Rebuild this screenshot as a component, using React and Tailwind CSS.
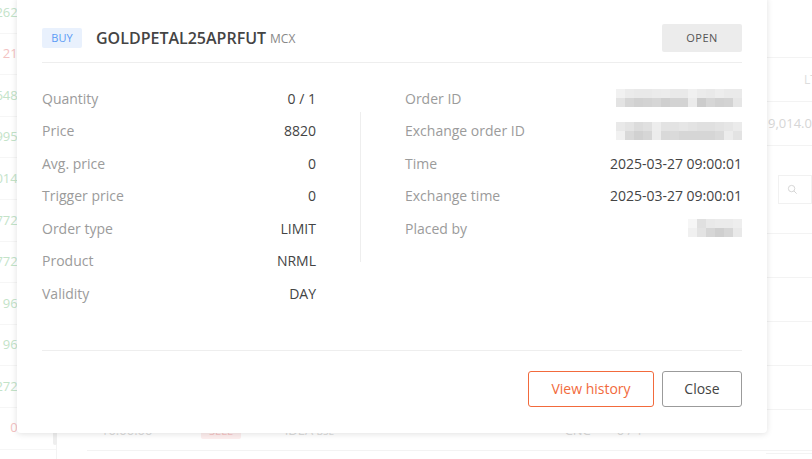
import React from 'react';

const leftRows = [
  { v: '262.50', c: 'text-[#c3e3c8]' },
  { v: '21.85', c: 'text-[#f3c2c2]' },
  { v: '648.20', c: 'text-[#c3e3c8]' },
  { v: '995.35', c: 'text-[#c3e3c8]' },
  { v: '014.05', c: 'text-[#c3e3c8]' },
  { v: '772.40', c: 'text-[#c3e3c8]' },
  { v: '772.40', c: 'text-[#c3e3c8]' },
  { v: '96.10', c: 'text-[#c3e3c8]' },
  { v: '96.10', c: 'text-[#c3e3c8]' },
  { v: '272.65', c: 'text-[#c3e3c8]' },
  { v: '0.05', c: 'text-[#f3c2c2]' },
];

const leftDetails = [
  ['Quantity', '0 / 1'],
  ['Price', '8820'],
  ['Avg. price', '0'],
  ['Trigger price', '0'],
  ['Order type', 'LIMIT'],
  ['Product', 'NRML'],
  ['Validity', 'DAY'],
];

// pixelated placeholder for the masked values
const Blur = ({ cells }) => (
  <div className="flex flex-col">
    {cells.map((row, i) => (
      <div key={i} className="flex">
        {row.map((c, j) => (
          <div key={j} className="h-[9px] w-[9px]" style={{ background: c }} />
        ))}
      </div>
    ))}
  </div>
);

const orderIdCells = [
  ['#f1f1f1', '#ebebeb', '#e9e9e9', '#e9e9e9', '#ebebeb', '#ececec', '#e9e9e9', '#e9e9e9', '#f0f0f0', '#ebebeb', '#e9e9e9', '#ededed', '#eaeaea', '#eaeaea'],
  ['#e3e3e3', '#d6d6d6', '#d1d1d1', '#d3d3d3', '#d6d6d6', '#cfcfcf', '#d3d3d3', '#d3d3d3', '#ebebeb', '#cccccc', '#d6d6d6', '#d1d1d1', '#d3d3d3', '#e6e6e6'],
];
const exIdCells = [
  ['#e9e9e9', '#e4e4e4', '#dcdcdc', '#e0e0e0', '#ededed', '#e3e3e3', '#e3e3e3', '#e6e6e6', '#e3e3e3', '#e0e0e0', '#e0e0e0', '#e3e3e3', '#e6e6e6', '#ebebeb'],
  ['#f1f1f1', '#d9d9d9', '#d1d1d1', '#d6d6d6', '#ececec', '#d9d9d9', '#dadada', '#d6d6d6', '#d6d6d6', '#d6d6d6', '#d6d6d6', '#dadada', '#ececec', '#e3e3e3'],
];
const placedCells = [
  ['#f6f6f6', '#e0e0e0', '#e9e9e9', '#ebebeb', '#ebebeb', '#eeeeee'],
  ['#f0f0f0', '#e3e3e3', '#d6d6d6', '#cfcfcf', '#d6d6d6', '#e9e9e9'],
];

const Background = () => (
  <div className="flex h-full w-full text-[13px]">
    <div className="mt-[-8px] flex w-[56px] flex-col">
      {leftRows.map((r, i) => (
        <div key={i} className="flex h-[41.6px] shrink-0 items-center justify-end whitespace-nowrap border-b border-[#f6f6f6] pr-[20px]">
          <span className={r.c}>{r.v}</span>
        </div>
      ))}
    </div>
    <div className="relative flex-1 border-l border-[#f3f3f3]">
      <div className="absolute left-[-4px] top-[430px] h-[15px] w-[4px] rounded-[2px] bg-[#eeeeee]" />
      <div className="absolute bottom-[14px] left-[40px] right-0 flex h-[28px] items-center text-[#dcdcdc]">
        <span className="ml-[4px] w-[100px]">10:00:00</span>
        <span className="rounded-[2px] bg-[#fdeeee] px-[8px] text-[11px] text-[#f6c4c4]">SELL</span>
        <span className="ml-[44px] w-[280px]">IDEA <span className="text-[10px]">BSE</span></span>
        <span className="w-[52px]">CNC</span>
        <span>0 / 1</span>
      </div>
      <div className="absolute bottom-[8px] left-[30px] right-0 border-b border-[#f3f3f3]" />
      <div className="absolute right-0 top-0 flex w-[46px] flex-col">
        <div className="h-[58px] border-b border-[#f3f3f3]" />
        <div className="flex h-[44px] items-center border-b border-[#f3f3f3] pl-[38px] text-[12px] text-[#dddddd]">LT</div>
        <div className="flex h-[44px] items-center border-b border-[#f3f3f3] pl-[2px] text-[#d6d6d6]">9,014.0</div>
        <div className="flex h-[88px] items-center border-b border-[#f3f3f3] pl-[12px]">
          <div className="flex h-[29px] w-full items-center border border-[#f1f1f1] pl-[8px]">
            <svg width="11" height="11" viewBox="0 0 24 24" fill="none" stroke="#d2d2d2" strokeWidth="2">
              <circle cx="10" cy="10" r="7" />
              <path d="M15 15l6 6" />
            </svg>
          </div>
        </div>
        {[0, 1, 2, 3, 4].map((i) => (
          <div key={i} className="h-[44px] shrink-0 border-b border-[#f3f3f3]" />
        ))}
      </div>
    </div>
  </div>
);

export default function App() {
  return (
    <div className="relative h-[459px] w-[812px] overflow-hidden bg-white font-['Open_Sans',sans-serif]">
      <Background />

      <div className="absolute left-[17px] top-[-4px] w-[750px] rounded-[4px] bg-white px-[25px] pb-[26px] pt-[28px] shadow-[0_1px_6px_rgba(0,0,0,0.12)]">
        <div className="flex items-center border-b border-[#eeeeee] pb-[10px]">
          <span className="flex h-[20px] w-[40px] items-center justify-center rounded-[2px] bg-[#e9f1fd] text-[11px] text-[#5b9bf5]">BUY</span>
          <span className="ml-[14px] text-[16px] font-semibold text-[#444444]">GOLDPETAL25APRFUT</span>
          <span className="ml-[4px] mt-[2px] text-[12px] text-[#888888]">MCX</span>
          <span className="ml-auto flex h-[28px] w-[80px] items-center justify-center rounded-[2px] bg-[#ececec] text-[11px] tracking-[0.5px] text-[#555555]">OPEN</span>
        </div>

        <div className="flex pt-[19px]">
          <div className="w-[274px]">
            {leftDetails.map(([k, v]) => (
              <div key={k} className="flex h-[32.5px] items-center justify-between text-[14px]">
                <span className="text-[#9b9b9b]">{k}</span>
                <span className="text-[#444444]">{v}</span>
              </div>
            ))}
          </div>
          <div className="mx-[44px] mt-[30px] h-[150px] w-px bg-[#eeeeee]" />
          <div className="flex-1 text-[14px]">
            <div className="flex h-[32.5px] items-center justify-between">
              <span className="text-[#9b9b9b]">Order ID</span>
              <Blur cells={orderIdCells} />
            </div>
            <div className="flex h-[32.5px] items-center justify-between">
              <span className="text-[#9b9b9b]">Exchange order ID</span>
              <Blur cells={exIdCells} />
            </div>
            <div className="flex h-[32.5px] items-center justify-between">
              <span className="text-[#9b9b9b]">Time</span>
              <span className="text-[#444444]">2025-03-27 09:00:01</span>
            </div>
            <div className="flex h-[32.5px] items-center justify-between">
              <span className="text-[#9b9b9b]">Exchange time</span>
              <span className="text-[#444444]">2025-03-27 09:00:01</span>
            </div>
            <div className="flex h-[32.5px] items-center justify-between">
              <span className="text-[#9b9b9b]">Placed by</span>
              <Blur cells={placedCells} />
            </div>
          </div>
        </div>

        <div className="mt-[40px] flex justify-end gap-[8px] border-t border-[#eeeeee] pt-[20px]">
          <button className="h-[36px] w-[126px] rounded-[3px] border border-[#f26a3c] text-[14px] text-[#f26a3c]">View history</button>
          <button className="h-[36px] w-[80px] rounded-[3px] border border-[#9b9b9b] text-[14px] text-[#444444]">Close</button>
        </div>
      </div>
    </div>
  );
}
